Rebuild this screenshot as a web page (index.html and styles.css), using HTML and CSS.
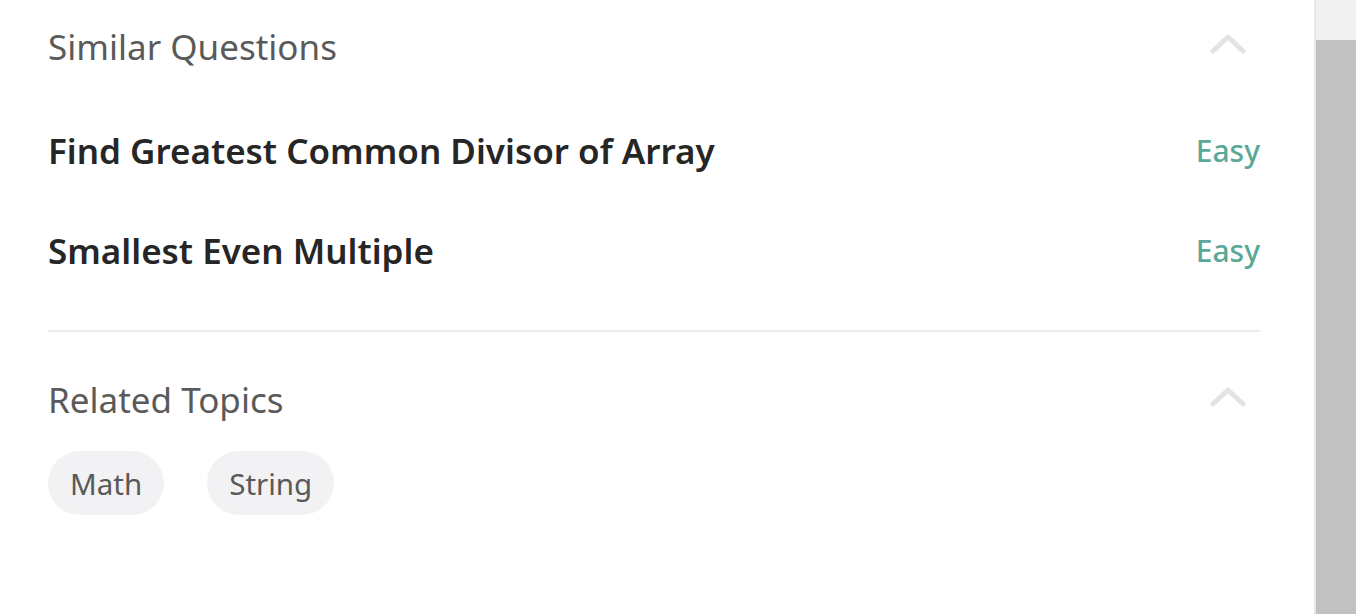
FILE: index.html
```html
<!DOCTYPE html>
<html>
<head>
<meta charset="utf-8">
<link rel="stylesheet" href="styles.css">
</head>
<body>
<div class="page">
  <main class="content">
    <section class="section first">
      <div class="sec-head">
        <h2 class="sec-title">Similar Questions</h2>
        <svg class="chev" width="36" height="20" viewBox="0 0 36 20"><path d="M3 17 L18 3 L33 17" fill="none" stroke="#e3e3e3" stroke-width="5" stroke-linecap="round" stroke-linejoin="round"/></svg>
      </div>
      <ul class="q-list">
        <li class="q-row"><span class="q-name">Find Greatest Common Divisor of Array</span><span class="q-diff">Easy</span></li>
        <li class="q-row"><span class="q-name">Smallest Even Multiple</span><span class="q-diff">Easy</span></li>
      </ul>
    </section>
    <section class="section second">
      <div class="sec-head">
        <h2 class="sec-title">Related Topics</h2>
        <svg class="chev" width="36" height="20" viewBox="0 0 36 20"><path d="M3 17 L18 3 L33 17" fill="none" stroke="#e3e3e3" stroke-width="5" stroke-linecap="round" stroke-linejoin="round"/></svg>
      </div>
      <div class="tags">
        <span class="tag">Math</span>
        <span class="tag">String</span>
      </div>
    </section>
  </main>
  <div class="scrollbar">
    <div class="sb-btn"></div>
    <div class="sb-thumb"></div>
  </div>
</div>
</body>
</html>
```
FILE: styles.css
```css
html, body {
  margin: 0;
  padding: 0;
  background: #fff;
}
body {
  font-family: "Noto Sans", "Open Sans", "Liberation Sans", sans-serif;
  overflow: hidden;
}
.page {
  display: flex;
  width: 1356px;
  height: 614px;
}
.content {
  flex: 1;
  padding: 0 54px 0 48px;
}
.section.first {
  padding-bottom: 30px;
  border-bottom: 2px solid #ececec;
}
.section.second {
  padding-top: 21px;
}
.sec-head {
  height: 92px;
  display: flex;
  align-items: center;
  justify-content: space-between;
}
.sec-title {
  margin: 0;
  font-size: 35px;
  font-weight: 400;
  color: #5a5a5a;
}
.chev {
  margin-right: 14px;
  margin-top: -4px;
}
.q-list {
  list-style: none;
  margin: 8px 0 0;
  padding: 0;
}
.q-row {
  height: 100px;
  display: flex;
  align-items: center;
  justify-content: space-between;
}
.q-name {
  font-size: 35px;
  font-weight: 600;
  color: #262626;
}
.q-diff {
  font-size: 30px;
  font-weight: 500;
  color: #5aa898;
}
.tags {
  display: flex;
  gap: 43px;
  margin-top: 6px;
}
.tag {
  height: 64px;
  display: flex;
  align-items: center;
  padding: 0 22px;
  border-radius: 32px;
  background: #f2f2f4;
  color: #595959;
  font-size: 29.5px;
}
.scrollbar {
  width: 40px;
  border-left: 2px solid #e8e8e8;
  background: #f0f0f0;
  display: flex;
  flex-direction: column;
}
.sb-btn {
  height: 40px;
}
.sb-thumb {
  flex: 1;
  background: #c1c1c1;
}
```
